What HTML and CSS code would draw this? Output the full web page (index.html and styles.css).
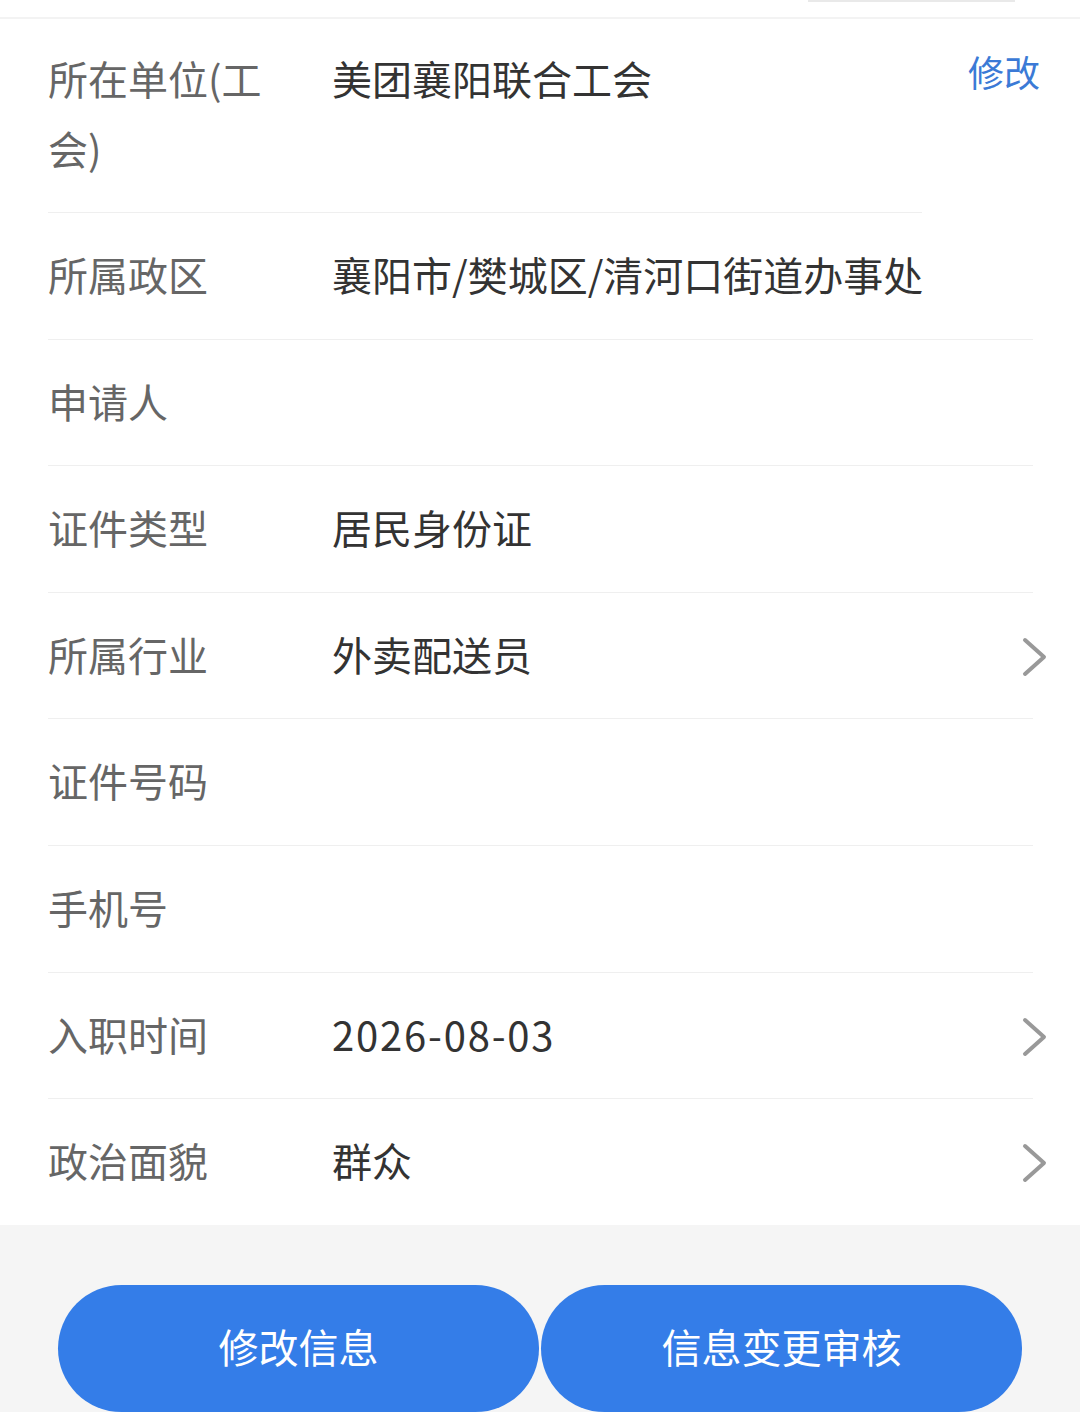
FILE: index.html
```html
<!DOCTYPE html>
<html lang="zh-CN">
<head>
<meta charset="utf-8">
<title>信息</title>
<link rel="stylesheet" href="styles.css">
</head>
<body>
<div class="topbar"><div class="handle"></div></div>
<div class="list">
  <div class="row-group">
    <div class="row row-first">
      <div class="label">所在单位(工会)</div>
      <div class="value">美团襄阳联合工会</div>
    </div>
    <a class="edit-link">修改</a>
  </div>
  <div class="row"><div class="label">所属政区</div><div class="value">襄阳市/樊城区/清河口街道办事处</div></div>
  <div class="row"><div class="label">申请人</div><div class="value"></div></div>
  <div class="row"><div class="label">证件类型</div><div class="value">居民身份证</div></div>
  <div class="row"><div class="label">所属行业</div><div class="value">外卖配送员</div>
    <svg class="chev" viewBox="0 0 28 40" width="28" height="40"><path d="M4 3 L23 20 L4 37" fill="none" stroke="#999" stroke-width="4" stroke-linecap="round" stroke-linejoin="round"/></svg></div>
  <div class="row"><div class="label">证件号码</div><div class="value"></div></div>
  <div class="row"><div class="label">手机号</div><div class="value"></div></div>
  <div class="row"><div class="label">入职时间</div><div class="value num">2026-08-03</div>
    <svg class="chev" viewBox="0 0 28 40" width="28" height="40"><path d="M4 3 L23 20 L4 37" fill="none" stroke="#999" stroke-width="4" stroke-linecap="round" stroke-linejoin="round"/></svg></div>
  <div class="row row-last"><div class="label">政治面貌</div><div class="value">群众</div>
    <svg class="chev" viewBox="0 0 28 40" width="28" height="40"><path d="M4 3 L23 20 L4 37" fill="none" stroke="#999" stroke-width="4" stroke-linecap="round" stroke-linejoin="round"/></svg></div>
</div>
<div class="footer">
  <button class="btn">修改信息</button>
  <button class="btn">信息变更审核</button>
</div>
</body>
</html>
```

FILE: styles.css
```css
html, body {
  margin: 0;
  padding: 0;
  background: #fff;
  font-family: "Noto Sans CJK SC", "Noto Sans", sans-serif;
}
.topbar {
  height: 17px;
  border-bottom: 2px solid #f3f3f3;
}
.handle {
  margin-left: 808px;
  width: 207px;
  height: 2px;
  background: #e9e9e9;
}
.list {
  background: #fff;
}
.row-group {
  display: flex;
  align-items: flex-start;
}
.row {
  display: flex;
  align-items: center;
  margin: 0 47px 0 48px;
  padding: 26px 0 29.6px;
  border-bottom: 1px solid #efefef;
  font-size: 40px;
  line-height: 70px;
}
.row-first {
  align-items: flex-start;
  margin: 0 0 0 48px;
  width: 874px;
  flex: none;
  padding: 24px 0 29px;
}
.row-last {
  border-bottom: none;
}
.label {
  width: 240px;
  flex: none;
  color: #666;
}
.value {
  margin-left: 44px;
  flex: 1;
  color: #333;
}
.num {
  letter-spacing: 1.8px;
}
.edit-link {
  margin: 34px 40px 0 auto;
  font-size: 36px;
  line-height: 36px;
  color: #3b7ad6;
}
.chev {
  flex: none;
  margin: 6px -16px 0 0;
}
.footer {
  background: #f5f5f5;
  padding: 60px 58px 0;
  display: flex;
  gap: 2px;
}
.btn {
  flex: 1;
  height: 127px;
  border: none;
  border-radius: 64px;
  background: #347de8;
  color: #fff;
  font-family: "Noto Sans CJK SC", "Noto Sans", sans-serif;
  font-size: 40px;
  line-height: 40px;
  padding: 0 0 4px;
}
```
